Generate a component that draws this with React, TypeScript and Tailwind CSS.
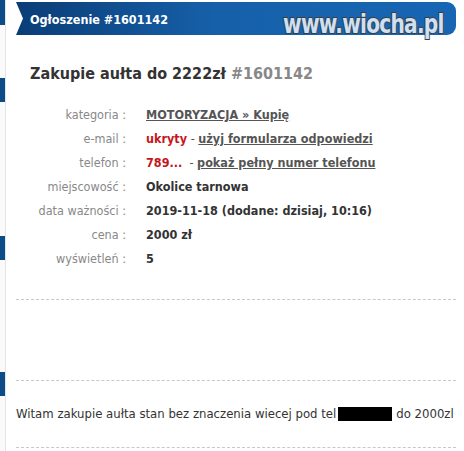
const ROWS: { label: string; value: React.ReactNode }[] = [
  {
    label: "kategoria",
    value: <span className="underline text-[#555]">MOTORYZACJA » Kupię</span>,
  },
  {
    label: "e-mail",
    value: (
      <>
        <span className="text-[#c4161c]">ukryty</span>
        <span className="font-normal text-[#555]"> - </span>
        <span className="underline text-[#555]">użyj formularza odpowiedzi</span>
      </>
    ),
  },
  {
    label: "telefon",
    value: (
      <>
        <span className="text-[#c4161c]">789...</span>
        <span className="font-normal text-[#555]"> &nbsp;- </span>
        <span className="underline text-[#555]">pokaż pełny numer telefonu</span>
      </>
    ),
  },
  { label: "miejscowość", value: "Okolice tarnowa" },
  { label: "data ważności", value: "2019-11-18 (dodane: dzisiaj, 10:16)" },
  { label: "cena", value: "2000 zł" },
  { label: "wyświetleń", value: "5" },
];

function LeftStrip() {
  return (
    <div className="relative w-[6px] shrink-0 border-r border-[#e4e4e4] bg-[#fafafa]">
      <div className="absolute left-0 top-0 h-[25px] w-[5px] bg-[#0d4c88]" />
      <div className="absolute left-0 top-[78px] h-[24px] w-[5px] bg-[#0d4c88]" />
      <div className="absolute left-0 top-[236px] h-[24px] w-[5px] bg-[#0d4c88]" />
      <div className="absolute left-0 top-[372px] h-[24px] w-[5px] bg-[#0d4c88]" />
    </div>
  );
}

export default function App() {
  return (
    <div
      className="relative flex h-[451px] w-[464px] overflow-hidden bg-white"
      style={{ fontFamily: '"DejaVu Sans Condensed", "DejaVu Sans", sans-serif' }}
    >
      <LeftStrip />
      <div className="ml-[10px] w-[440px] pt-[2px]">
        {/* Header banner */}
        <div className="flex h-[33px] items-start justify-between rounded-r-[9px] bg-[linear-gradient(90deg,#0a3d76_0%,#1660a9_45%,#1766b4_100%)] pl-[14px] pr-[8px] [clip-path:polygon(0_0,100%_0,100%_100%,0_100%,7px_50%)]">
          <span className="mt-[9px] text-[12.5px] font-bold text-white">Ogłoszenie #1601142</span>
        </div>

        {/* Title */}
        <h1 className="mt-[27px] pl-[14px] text-[16px] font-bold text-[#333]">
          Zakupie aułta do 2222zł <span className="text-[#888]">#1601142</span>
        </h1>

        {/* Details */}
        <div className="mt-[17px] flex flex-col">
          {ROWS.map((r) => (
            <div key={r.label} className="flex h-[24px] items-center text-[12.5px]">
              <div className="w-[110px] shrink-0 text-right text-[#888]">{r.label} :</div>
              <div className="pl-[20px] font-bold text-[#333]">{r.value}</div>
            </div>
          ))}
        </div>

        <div className="mt-[28px] border-t border-dashed border-[#c8c8c8]" />
        <div className="h-[80px]" />
        <div className="border-t border-dashed border-[#c8c8c8]" />

        <div className="flex h-[66px] items-center whitespace-nowrap text-[13px] text-[#333]">
          Witam zakupie aułta stan bez znaczenia wiecej pod tel{" "}
          <span className="ml-[2px] mr-[4px] inline-block h-[14px] w-[54px] bg-black" />
          do 2000zl
        </div>
        <div className="border-t border-dashed border-[#c8c8c8]" />
      </div>

      {/* watermark overlay */}
      <span
        className="absolute left-[283px] top-[12px] origin-left scale-y-[1.2] text-[22.5px] font-bold leading-none tracking-[-0.8px] text-[#cfe0f3]"
        style={{
          WebkitTextStroke: "1.6px #3a3f46",
          paintOrder: "stroke fill",
        }}
      >
        www.wiocha.pl
      </span>
    </div>
  );
}
